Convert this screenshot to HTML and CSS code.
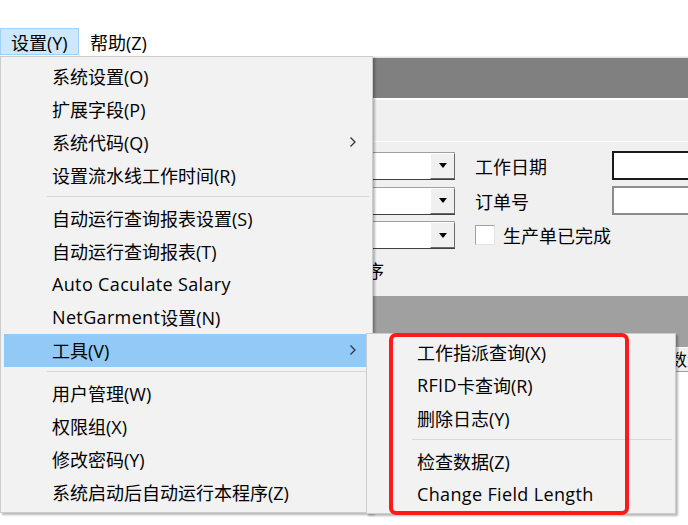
FILE: index.html
```html
<!DOCTYPE html>
<html lang="zh-CN">
<head>
<meta charset="utf-8">
<title>设置菜单</title>
<link rel="stylesheet" href="styles.css">
</head>
<body>
<div class="screen">
  <div class="app">
    <div class="topgap"></div>
    <div class="menubar">
      <div class="mb-item active">设置(Y)</div>
      <div class="mb-item">帮助(Z)</div>
    </div>
    <div class="client">
      <div class="caption"></div>
      <div class="toolbar"></div>
      <div class="form">
        <div class="row">
          <div class="combo"><div class="field"></div><div class="btn"><span class="tri"></span></div></div>
          <div class="label">工作日期</div>
          <div class="input focus"></div>
        </div>
        <div class="row">
          <div class="combo"><div class="field"></div><div class="btn"><span class="tri"></span></div></div>
          <div class="label">订单号</div>
          <div class="input"></div>
        </div>
        <div class="row">
          <div class="combo"><div class="field"></div><div class="btn"><span class="tri"></span></div></div>
          <div class="check"><span class="box"></span><span>生产单已完成</span></div>
        </div>
        <div class="row">
          <div class="label4">按工序</div>
        </div>
      </div>
      <div class="band"></div>
      <div class="grid-head">
        <div class="gh-cell wide"></div>
        <div class="gh-cell">数量</div>
      </div>
      <div class="grid-body"></div>
    </div>
  </div>

  <div class="menu main">
    <div class="item">系统设置(O)</div>
    <div class="item">扩展字段(P)</div>
    <div class="item">系统代码(Q)<svg class="chev" width="8" height="12" viewBox="0 0 8 12"><path d="M1.5 1.5 L6 6 L1.5 10.5" fill="none" stroke="#333" stroke-width="1.3"/></svg></div>
    <div class="item">设置流水线工作时间(R)</div>
    <div class="sep"></div>
    <div class="item">自动运行查询报表设置(S)</div>
    <div class="item">自动运行查询报表(T)</div>
    <div class="item lat">Auto Caculate Salary</div>
    <div class="item"><span class="lat">NetGarment</span>设置(N)</div>
    <div class="item hot">工具(V)<svg class="chev" width="8" height="12" viewBox="0 0 8 12"><path d="M1.5 1.5 L6 6 L1.5 10.5" fill="none" stroke="#333" stroke-width="1.3"/></svg></div>
    <div class="sep"></div>
    <div class="item">用户管理(W)</div>
    <div class="item">权限组(X)</div>
    <div class="item">修改密码(Y)</div>
    <div class="item">系统启动后自动运行本程序(Z)</div>
  </div>

  <div class="menu sub">
    <div class="item">工作指派查询(X)</div>
    <div class="item"><span class="lat">RFID</span>卡查询(R)</div>
    <div class="item">删除日志(Y)</div>
    <div class="sep"></div>
    <div class="item">检查数据(Z)</div>
    <div class="item lat">Change Field Length</div>
  </div>

  <div class="redbox"></div>
</div>
</body>
</html>
```

FILE: styles.css
```css
* { box-sizing: border-box; }
html, body { margin: 0; padding: 0; background: #fff; }
body {
  font-family: "Open Sans", "Noto Sans CJK SC", sans-serif;
  font-size: 18px;
  color: #000;
}
.screen {
  position: relative;
  width: 688px;
  height: 525px;
  overflow: hidden;
  background: #fff;
}
.app { display: flex; flex-direction: column; height: 100%; }
.topgap { height: 28px; background: #fff; }
.menubar {
  height: 28px;
  display: flex;
  align-items: stretch;
  background: #fff;
}
.mb-item {
  display: flex;
  align-items: center;
  padding: 0 10px 0 10px;
  border: 1px solid transparent;
  height: 27px;
}
.mb-item.active { background: #cce8ff; border-color: #99d1ff; width: 79px; }
.client { flex: 1; background: #f0f0f0; display: flex; flex-direction: column; }
.caption { margin-top: 1px; height: 41px; background: #808080; border-top: 1px solid #e0e0e0; }
.toolbar { height: 44px; border-top: 2px solid #fff; border-bottom: 1px solid #fff; }
.form {
  padding: 9px 0 0 200px;
  display: flex;
  flex-direction: column;
  gap: 7px;
}
.row {
  display: grid;
  grid-template-columns: 255px 20px 137px 140px;
  height: 28px;
  align-items: center;
}
.combo {
  grid-column: 1;
  display: flex;
  height: 28px;
  border-top: 1px solid #a0a0a0;
  border-left: 1px solid #a0a0a0;
  border-bottom: 1px solid #404040;
  background: #fff;
}
.field { flex: 1; background: #fff; }
.btn {
  width: 25px;
  background: #f0f0f0;
  border-left: 1px solid #fff;
  border-top: 1px solid #fff;
  border-right: 1px solid #696969;
  border-bottom: 1px solid #696969;
  display: flex;
  align-items: center;
  justify-content: center;
}
.tri {
  width: 0; height: 0;
  border-left: 4px solid transparent;
  border-right: 4px solid transparent;
  border-top: 5px solid #000;
}
.label { grid-column: 3; font-family: "Noto Sans CJK SC", sans-serif; font-size: 18px; }
.input { grid-column: 4; height: 29px; background: #fff; border: 2px solid #8c8c8c; }
.input.focus { border-color: #1a1a1a; }
.check {
  grid-column: 3 / span 2;
  display: flex;
  align-items: center;
  gap: 8px;
  font-family: "Noto Sans CJK SC", sans-serif;
}
.box {
  width: 20px; height: 20px;
  background: #fff;
  border: 1px solid #a0a0a0;
  border-right-color: #e3e3e3;
  border-bottom-color: #e3e3e3;
}
.label4 {
  grid-column: 1;
  text-align: right;
  padding-right: 71px;
  font-family: "Noto Sans CJK SC", sans-serif;
}
.band { margin-top: 12px; height: 51px; background: #a0a0a0; }
.grid-head { display: flex; height: 24px; border-top: 1px solid #fff; background: #f0f0f0; overflow: hidden; }
.gh-cell {
  flex-shrink: 0;
  padding-left: 8px;
  border-left: 1px solid #fff;
  font-family: "Noto Sans CJK SC", sans-serif;
  font-size: 17px;
  line-height: 22px;
  white-space: nowrap;
}
.gh-cell.wide { width: 661px; border: 0; padding: 0; }
.grid-body { flex: 1; background: #fff; border-top: 1px solid #a0a0a0; }

/* popup menus */
.menu {
  position: absolute;
  background: #f2f2f2;
  border: 1px solid #cccccc;
  box-shadow: 2px 2px 2px rgba(0,0,0,0.28);
  display: flex;
  flex-direction: column;
}
.menu.main { left: 0; top: 56px; width: 373px; padding: 3px; }
.menu.sub { left: 366px; top: 333px; width: 310px; padding: 2px 3px; }
.item {
  height: 33px;
  display: flex;
  align-items: center;
  padding-left: 48px;
  padding-bottom: 2px;
  white-space: nowrap;
}
.lat { letter-spacing: 0.35px; }
.menu.sub .item { padding-left: 47px; }
.item.hot { background: #91c9f7; }
.chev { margin-left: auto; margin-right: 12px; }
.sep { height: 10px; position: relative; }
.sep::before {
  content: "";
  position: absolute;
  left: 43px; right: 0; top: 4px;
  height: 1px;
  background: #d7d7d7;
}
.menu.sub .sep::before { left: 42px; right: 0; top: 4px; }

.redbox {
  position: absolute;
  left: 389px; top: 333px;
  width: 240px; height: 182px;
  border: 4px solid #ff1a1a;
  border-radius: 7px;
}
```
